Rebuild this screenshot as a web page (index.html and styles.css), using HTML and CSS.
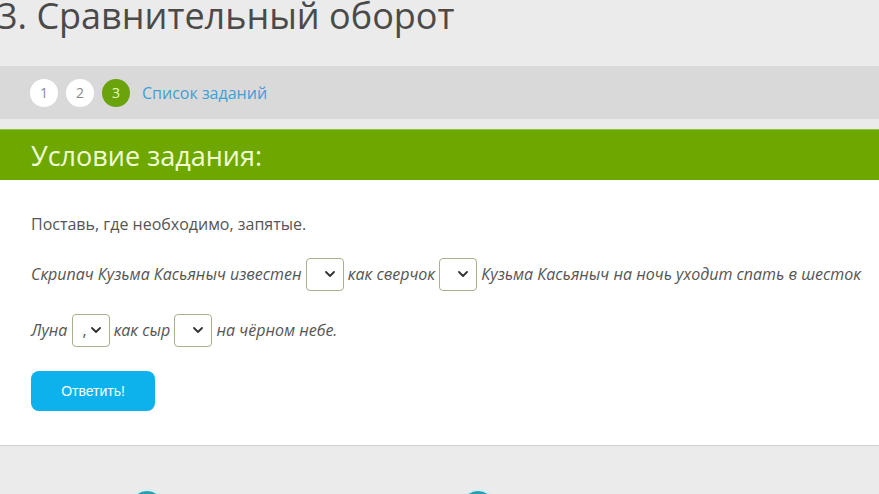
FILE: index.html
```html
<!DOCTYPE html>
<html lang="ru">
<head>
<meta charset="utf-8">
<title>3. Сравнительный оборот</title>
<link rel="stylesheet" href="styles.css">
</head>
<body>
<div class="page">
  <header class="top">
    <h1 class="title">3. Сравнительный оборот</h1>
  </header>
  <nav class="steps">
    <span class="step">1</span>
    <span class="step">2</span>
    <span class="step active">3</span>
    <a class="list-link" href="#">Список заданий</a>
  </nav>
  <div class="spacer"></div>
  <section class="task">
    <h2 class="task-head">Условие задания:</h2>
    <div class="task-body">
      <p class="lead">Поставь, где необходимо, запятые.</p>
      <p class="sent">Скрипач Кузьма Касьяныч известен <span class="sel"><span class="val"></span><svg class="chev" viewBox="0 0 10 6" width="10" height="6"><path d="M1 1l4 4 4-4" fill="none" stroke="#333" stroke-width="1.8" stroke-linecap="round" stroke-linejoin="round"/></svg></span> как сверчок <span class="sel"><span class="val"></span><svg class="chev" viewBox="0 0 10 6" width="10" height="6"><path d="M1 1l4 4 4-4" fill="none" stroke="#333" stroke-width="1.8" stroke-linecap="round" stroke-linejoin="round"/></svg></span> Кузьма Касьяныч на ночь уходит спать в шесток</p>
      <p class="sent sent2">Луна <span class="sel"><span class="val">,</span><svg class="chev" viewBox="0 0 10 6" width="10" height="6"><path d="M1 1l4 4 4-4" fill="none" stroke="#333" stroke-width="1.8" stroke-linecap="round" stroke-linejoin="round"/></svg></span> как сыр <span class="sel"><span class="val"></span><svg class="chev" viewBox="0 0 10 6" width="10" height="6"><path d="M1 1l4 4 4-4" fill="none" stroke="#333" stroke-width="1.8" stroke-linecap="round" stroke-linejoin="round"/></svg></span> на чёрном небе.</p>
      <button class="answer" type="button">Ответить!</button>
    </div>
  </section>
  <footer class="bottom">
    <span class="dot d1"></span>
    <span class="dot d2"></span>
  </footer>
</div>
</body>
</html>
```
FILE: styles.css
```css
html, body {
  margin: 0;
  padding: 0;
  background: #ebebeb;
  overflow: hidden;
}
.page {
  width: 879px;
  height: 494px;
  overflow: hidden;
  font-family: "Open Sans", "Noto Sans", sans-serif;
  color: #555;
}
.top {
  height: 66px;
  background: #ebebeb;
  overflow: hidden;
}
.title {
  margin: -2px 0 0 -3px;
  font-size: 36px;
  line-height: 36px;
  font-weight: 400;
  color: #4a4a4a;
  white-space: nowrap;
}
.steps {
  height: 53px;
  background: #d9d9d9;
  display: flex;
  align-items: center;
  gap: 8px;
  padding-left: 30px;
}
.step {
  width: 28px;
  height: 28px;
  border-radius: 50%;
  background: #fff;
  color: #8a8a8a;
  font-size: 14px;
  display: flex;
  align-items: center;
  justify-content: center;
}
.step.active {
  background: #6aa30c;
  color: #eaffb8;
}
.list-link {
  margin-left: 4px;
  color: #3f9fd6;
  font-size: 16px;
  text-decoration: none;
}
.spacer {
  height: 10px;
}
.task {
  background: #fff;
  border-bottom: 1px solid #cfcfcf;
}
.task-head {
  margin: 0;
  height: 51px;
  background: #6ea700;
  border-top: 1px solid #8cc63a;
  box-sizing: border-box;
  display: flex;
  align-items: center;
  padding-left: 31px;
  font-size: 27px;
  font-weight: 400;
  color: #f2ffd6;
}
.task-body {
  padding: 32px 31px 34px;
}
.lead {
  margin: 0;
  font-size: 16px;
  line-height: 24px;
  color: #555;
}
.sent {
  margin: 22px 0 0;
  font-size: 16px;
  font-style: italic;
  line-height: 33px;
  color: #555;
  white-space: nowrap;
}
.sent2 {
  margin-top: 23px;
}
.sel {
  display: inline-flex;
  align-items: center;
  justify-content: space-between;
  box-sizing: border-box;
  width: 38px;
  height: 33px;
  vertical-align: middle;
  border: 1px solid #a9b08c;
  border-radius: 4px;
  background: #fff;
  padding: 0 8px 0 10px;
  font-style: normal;
  color: #555;
  margin-top: -3px;
}
.val {
  font-size: 16px;
  line-height: 1;
}
.answer {
  margin-top: 24px;
  display: block;
  width: 124px;
  height: 40px;
  border: none;
  border-radius: 8px;
  background: #0db1ec;
  color: #fff;
  font-family: "Liberation Sans", Arial, sans-serif;
  font-size: 14px;
}
.bottom {
  position: relative;
  height: 60px;
}
.dot {
  position: absolute;
  top: 45px;
  width: 32px;
  height: 32px;
  border-radius: 50%;
  background: #2a9fb0;
  box-shadow: 0 0 0 2px #d6eff2;
}
.d1 { left: 131px; }
.d2 { left: 462px; }
```
